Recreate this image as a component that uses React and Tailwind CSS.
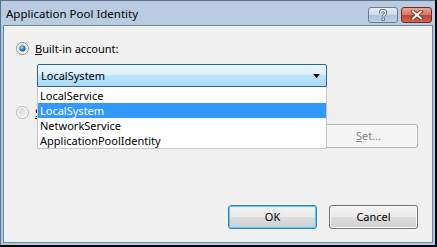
import React from "react";

const FONT = { fontFamily: '"Noto Sans", "Open Sans", sans-serif' };

function Radio({ checked, disabled }) {
  return (
    <svg width="13" height="13" viewBox="0 0 13 13" className="shrink-0">
      <defs>
        <linearGradient id={checked ? "rg1" : "rg2"} x1="0" y1="0" x2="1" y2="1">
          <stop offset="0" stopColor={disabled ? "#d6d6d6" : "#c8c8c8"} />
          <stop offset="1" stopColor={disabled ? "#f6f6f6" : "#f4f4f4"} />
        </linearGradient>
        <radialGradient id="dot" cx="0.4" cy="0.35" r="0.7">
          <stop offset="0" stopColor="#c7ebff" />
          <stop offset="0.45" stopColor="#2e8ad0" />
          <stop offset="1" stopColor="#0d4f88" />
        </radialGradient>
      </defs>
      <circle cx="6.5" cy="6.5" r="6" fill="#fff" stroke={disabled ? "#b5b5b5" : "#8e8f8f"} />
      <circle cx="6.5" cy="6.5" r="4.5" fill={`url(#${checked ? "rg1" : "rg2"})`} />
      {checked && <circle cx="6.5" cy="6.5" r="3" fill="url(#dot)" />}
    </svg>
  );
}

function Button({ children, isDefault, disabled, className = "" }) {
  const border = disabled
    ? "border-[#adb2b5]"
    : isDefault
    ? "border-[#3c7fb1]"
    : "border-[#707070]";
  const bg = disabled
    ? "bg-[#f4f4f4]"
    : "bg-[linear-gradient(#f2f2f2_0%,#ebebeb_50%,#dddddd_50%,#cfcfcf_100%)]";
  return (
    <div
      className={`h-[24px] rounded-[3px] border ${border} ${bg} flex items-center justify-center text-[11px] ${
        disabled ? "text-[#838383]" : "text-black"
      } ${isDefault ? "shadow-[inset_0_0_0_1px_#48d1ff]" : "shadow-[inset_0_0_0_1px_#fcfcfc]"} ${className}`}
    >
      {children}
    </div>
  );
}

export default function App() {
  const items = ["LocalService", "LocalSystem", "NetworkService", "ApplicationPoolIdentity"];
  return (
    <div className="w-[437px] h-[247px] bg-black" style={FONT}>
      <div className="w-[435px] h-[245px] flex flex-col bg-[linear-gradient(#b9cbe1,#c8d6e8)] border-l border-t border-[#5c7390]">
        {/* title bar */}
        <div className="h-[25px] flex items-start shrink-0">
          <div className="pl-[5px] pt-[6px] text-[11.5px] leading-[14px] text-black">Application Pool Identity</div>
          <div className="ml-auto mt-[6px] mr-[3px] flex gap-[3px]">
            <div className="w-[30px] h-[16px] rounded-[3px] border border-[#6a7d95] bg-[linear-gradient(#e4ecf6_0%,#c9d8ea_50%,#aec3dd_50%,#bdd0e6_100%)] flex items-center justify-center">
              <svg width="12" height="12" viewBox="0 0 12 12">
                <path
                  d="M3.5 4.2 C3.5 2.4 4.6 1.5 6 1.5 C7.6 1.5 8.6 2.4 8.6 3.8 C8.6 5.6 6.4 5.8 6.4 7.6"
                  fill="none"
                  stroke="#4a5668"
                  strokeWidth="3"
                />
                <path
                  d="M3.5 4.2 C3.5 2.4 4.6 1.5 6 1.5 C7.6 1.5 8.6 2.4 8.6 3.8 C8.6 5.6 6.4 5.8 6.4 7.6"
                  fill="none"
                  stroke="#fff"
                  strokeWidth="1.4"
                />
                <rect x="4.7" y="8.6" width="3.2" height="3" fill="#4a5668" />
                <rect x="5.4" y="9.3" width="1.8" height="1.6" fill="#fff" />
              </svg>
            </div>
            <div className="w-[31px] h-[16px] rounded-[3px] border border-[#6e2a23] bg-[linear-gradient(#e8a597_0%,#d47563_50%,#bf4331_50%,#d0644f_100%)] flex items-center justify-center">
              <svg width="14" height="10" viewBox="0 0 14 10">
                <path d="M3 1.5 L11 8.5 M11 1.5 L3 8.5" stroke="#5a2a24" strokeWidth="3.6" strokeLinecap="square" />
                <path d="M3 1.5 L11 8.5 M11 1.5 L3 8.5" stroke="#fff" strokeWidth="2" strokeLinecap="square" />
              </svg>
            </div>
          </div>
        </div>
        {/* body frame */}
        <div className="flex-1 flex pl-[2px] pr-[2px] pb-[2px] bg-[#aacbe8] -mt-[1px]">
          <div className="flex-1 relative flex flex-col bg-[#f0f0f0] border border-[#6b87a6] text-[11px] leading-[14px]">
            <div className="mt-[16px] ml-[12px] flex items-center gap-[6px] h-[13px]">
              <Radio checked />
              <span>
                <span className="underline">B</span>uilt-in account:
              </span>
            </div>
            <div className="mt-[9px] ml-[33px] w-[290px] h-[23px] border border-[#2c628b] rounded-t-[2px] bg-[linear-gradient(#eaf6fd_0%,#d9f0fc_45%,#bee6fd_50%,#a7d9f5_100%)] flex items-center pl-[3px] pr-[5px]">
              <span>LocalSystem</span>
              <svg width="7" height="4" viewBox="0 0 7 4" className="ml-auto mr-[1px]">
                <path d="M0 0 H7 L3.5 4 Z" fill="#000" />
              </svg>
            </div>
            <div className="mt-[19px] ml-[12px] flex items-center gap-[6px] h-[13px]">
              <Radio disabled />
              <span>
                <span className="underline">S</span>pecific user:
              </span>
            </div>
            <div className="mt-[5px] flex justify-end mr-[14px]">
              <Button disabled className="w-[99px]">
                <span>
                  <span className="underline">S</span>et...
                </span>
              </Button>
            </div>
            <div className="mt-auto mb-[13px] mr-[14px] flex justify-end gap-[12px]">
              <Button isDefault className="w-[89px]">OK</Button>
              <Button className="w-[89px]">Cancel</Button>
            </div>
            {/* open dropdown list */}
            <div className="absolute left-[33px] top-[61px] w-[290px] bg-white border-x border-b border-[#c5c5d5] pt-[1px]">
              {items.map((it) => (
                <div
                  key={it}
                  className={`h-[15px] leading-[15px] pl-[2px] ${
                    it === "LocalSystem" ? "bg-[#3399ff] text-white" : "text-black"
                  }`}
                >
                  {it}
                </div>
              ))}
            </div>
          </div>
        </div>
      </div>
    </div>
  );
}
